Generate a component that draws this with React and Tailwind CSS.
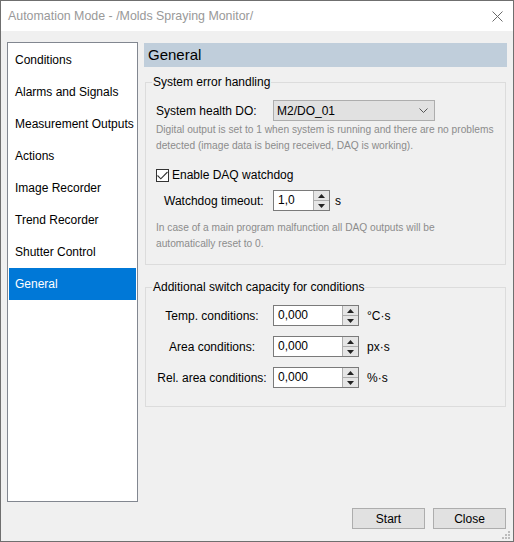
import { useState } from "react";

const pages = [
  "Conditions",
  "Alarms and Signals",
  "Measurement Outputs",
  "Actions",
  "Image Recorder",
  "Trend Recorder",
  "Shutter Control",
  "General",
];

// kleines Spin-Feld wie im WinForms NumericUpDown
function SpinBox({ value, width }) {
  return (
    <div className={`flex h-[21px] ${width} border border-[#7a7a7a] bg-white`}>
      <div className="flex-1 pl-[4px] leading-[19px] text-black">{value}</div>
      <div className="flex w-[16px] flex-col border-l border-[#adadad] bg-[#e5e5e5]">
        <div className="flex flex-1 items-center justify-center border-b border-[#adadad]">
          <svg width="7" height="4" viewBox="0 0 7 4">
            <path d="M0 4 L3.5 0 L7 4 Z" fill="#222" />
          </svg>
        </div>
        <div className="flex flex-1 items-center justify-center">
          <svg width="7" height="4" viewBox="0 0 7 4">
            <path d="M0 0 L3.5 4 L7 0 Z" fill="#222" />
          </svg>
        </div>
      </div>
    </div>
  );
}

function Group({ title, children, className = "" }) {
  return (
    <fieldset className={`border border-[#dcdcdc] px-0 ${className}`}>
      <legend className="ml-[6px] px-px leading-[16px] text-black">{title}</legend>
      {children}
    </fieldset>
  );
}

export default function App() {
  const [selected, setSelected] = useState("General");
  const [watchdog, setWatchdog] = useState(true);

  return (
    <div className="flex h-[542px] w-[514px] flex-col border border-[#6f6f6f] bg-[#f0f0f0] font-['Liberation_Sans',Arial,sans-serif] text-[12px] text-black">
      {/* Titelleiste */}
      <div className="flex h-[30px] shrink-0 items-center justify-between bg-white pl-[7px] pr-[10px]">
        <span className="text-[12.4px] text-[#999999]">Automation Mode - /Molds Spraying Monitor/</span>
        <svg width="11" height="11" viewBox="0 0 11 11">
          <path d="M0.5 0.5 L10.5 10.5 M10.5 0.5 L0.5 10.5" stroke="#6a6a6a" strokeWidth="1" />
        </svg>
      </div>

      <div className="flex flex-1 flex-col pl-[6px] pr-[6px] pt-[11px]">
        <div className="flex gap-[6px]">
          {/* Seitenliste */}
          <div className="h-[460px] w-[131px] border border-[#828790] bg-white p-px">
            {pages.map((p) => (
              <div
                key={p}
                onClick={() => setSelected(p)}
                className={`flex h-[32px] cursor-default items-center pl-[6px] ${
                  selected === p ? "bg-[#0078d7] text-white" : "text-black"
                }`}
              >
                {p}
              </div>
            ))}
          </div>

          {/* Inhalt */}
          <div className="mt-px w-[363px]">
            <div className="flex h-[24px] items-center bg-[#c0cedb] pl-[4px] text-[15px]">General</div>

            <Group title="System error handling" className="mx-px mt-[7px] pb-[12px]">
              <div className="mt-[10px] flex items-center pl-[10px]">
                <span className="w-[117px]">System health DO:</span>
                <div className="flex h-[21px] w-[162px] items-center justify-between border border-[#adadad] bg-[#e1e1e1] pl-[3px] pr-[6px]">
                  <span>M2/DO_01</span>
                  <svg width="9" height="5" viewBox="0 0 9 5">
                    <path d="M0.5 0.5 L4.5 4.5 L8.5 0.5" stroke="#555" fill="none" strokeWidth="1" />
                  </svg>
                </div>
              </div>
              <p className="mt-px pl-[10px] pr-[2px] text-[10.2px] leading-[16px] text-[#8c8c8c]">
                Digital output is set to 1 when system is running and there are no problems detected (image data is being received, DAQ is working).
              </p>

              <label className="mt-[13px] flex h-[16px] items-center pl-[10px]" onClick={() => setWatchdog(!watchdog)}>
                <span className="mr-[3px] flex h-[13px] w-[13px] items-center justify-center border border-[#333333] bg-white">
                  {watchdog && (
                    <svg width="11" height="9" viewBox="0 0 11 9">
                      <path d="M0.5 4.5 L3.8 7.8 L10.5 1" stroke="#333" fill="none" strokeWidth="1.1" />
                    </svg>
                  )}
                </span>
                Enable DAQ watchdog
              </label>

              <div className="mt-[7px] flex items-center pl-[18px]">
                <span className="w-[109px]">Watchdog timeout:</span>
                <SpinBox value="1,0" width="w-[57px]" />
                <span className="ml-[5px]">s</span>
              </div>

              <p className="mt-[9px] pl-[10px] pr-[40px] text-[10.2px] leading-[16px] text-[#8c8c8c]">
                In case of a main program malfunction all DAQ outputs will be automatically reset to 0.
              </p>
            </Group>

            <Group title="Additional switch capacity for conditions" className="mx-px mt-[14px] pb-[18px]">
              <div className="mt-[10px] flex flex-col gap-[10px]">
                {[
                  ["Temp. conditions:", "°C·s"],
                  ["Area conditions:", "px·s"],
                  ["Rel. area conditions:", "%·s"],
                ].map(([label, unit]) => (
                  <div key={label} className="flex items-center pl-[5px]">
                    <span className="w-[122px] text-center">{label}</span>
                    <SpinBox value="0,000" width="w-[86px]" />
                    <span className="ml-[8px]">{unit}</span>
                  </div>
                ))}
              </div>
            </Group>
          </div>
        </div>

        {/* Schaltflächen */}
        <div className="mt-[6px] flex justify-end gap-[8px] pr-px">
          <button className="h-[21px] w-[73px] border border-[#adadad] bg-[#e1e1e1]">Start</button>
          <button className="h-[21px] w-[73px] border border-[#adadad] bg-[#e1e1e1]">Close</button>
        </div>
        <div className="flex flex-1 items-end justify-end pb-px">
          <svg width="10" height="10" viewBox="0 0 10 10" className="-mr-[4px]">
            <rect x="7" y="1" width="2" height="2" fill="#bcbcbc" />
            <rect x="4" y="4" width="2" height="2" fill="#bcbcbc" />
            <rect x="7" y="4" width="2" height="2" fill="#bcbcbc" />
            <rect x="1" y="7" width="2" height="2" fill="#bcbcbc" />
            <rect x="4" y="7" width="2" height="2" fill="#bcbcbc" />
            <rect x="7" y="7" width="2" height="2" fill="#bcbcbc" />
          </svg>
        </div>
      </div>
    </div>
  );
}
